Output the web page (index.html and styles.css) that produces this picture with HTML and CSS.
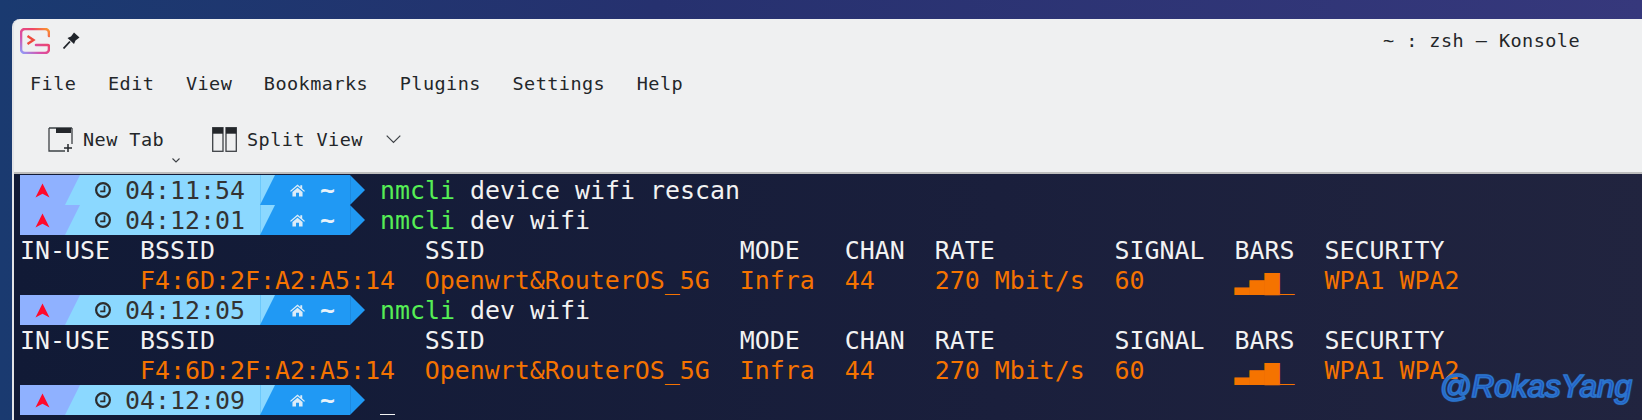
FILE: index.html
```html
<!DOCTYPE html>
<html lang="en">
<head>
<meta charset="utf-8">
<title>~ : zsh — Konsole</title>
<link rel="stylesheet" href="styles.css">
</head>
<body>
<svg class="defs" width="0" height="0" aria-hidden="true">
  <defs>
    <linearGradient id="logo-grad" x1="0" y1="1" x2="1" y2="0">
      <stop offset="0" stop-color="#8f9dfa"/>
      <stop offset="0.35" stop-color="#d94fa8"/>
      <stop offset="0.7" stop-color="#ee4468"/>
      <stop offset="1" stop-color="#fb9a2c"/>
    </linearGradient>
    <symbol id="arch" viewBox="0 0 16 16">
      <path d="M8 0.500 L15.500 15.500 L8 11.400 L0.500 15.500 Z" fill="#ff0a2a"/>
    </symbol>
    <symbol id="clock" viewBox="0 0 16 16">
      <circle cx="8" cy="8" r="6.900" fill="none" stroke="#2d2d2d" stroke-width="2.200"/>
      <path d="M9.500 3.800 V9.300 H5.200" fill="none" stroke="#2d2d2d" stroke-width="1.700"/>
    </symbol>
    <symbol id="home" viewBox="0 0 16 13">
      <path d="M8 0.200 L11 2.700 V0.800 H13 V4.300 L16 7 L15 7.800 L8 2 L1 7.800 L0 7 Z M2.600 8 L8 3.500 L13.400 8 V13 H9.600 V9 H6.400 V13 H2.600 Z" fill="#dcecf8"/>
    </symbol>
  </defs>
</svg>
<div class="desktop">
  <div class="window">
    <header class="titlebar">
      <svg class="logo" viewBox="0 0 30 26" width="30" height="26">
        <path d="M29 8 V5 A4 4 0 0 0 25 1 H5 A4 4 0 0 0 1 5 V21 A4 4 0 0 0 5 25 H25 A4 4 0 0 0 29 21 V18.500 A1.500 1.500 0 0 0 27.500 17 H16" fill="none" stroke="url(#logo-grad)" stroke-width="2.600" stroke-linecap="round"/>
        <path d="M7.500 8 L13.500 12 L7.500 16" fill="none" stroke="#ef4a3c" stroke-width="2.400"/>
      </svg>
      <svg class="pin" viewBox="0 0 17 17" width="17" height="17">
        <path d="M11 0.500 L16.500 5.500 L12.500 8.500 L11 12 L4.500 6 L8 4.500 Z" fill="#20242a"/>
        <path d="M7 9.500 L0.500 16.500" stroke="#20242a" stroke-width="1.800"/>
      </svg>
      <span class="wintitle">~ : zsh — Konsole</span>
    </header>
    <nav class="menubar">
      <span>File</span><span>Edit</span><span>View</span><span>Bookmarks</span><span>Plugins</span><span>Settings</span><span>Help</span>
    </nav>
    <div class="toolbar">
      <div class="tool tool-new">
        <svg viewBox="0 0 25 25" width="25" height="25">
          <path d="M1 1 H24 M1 1 V24 H17 M24 1 V17" fill="none" stroke="#3d4146" stroke-width="1.300"/>
          <rect x="8" y="1" width="15" height="5" fill="#24272b"/>
          <path d="M20 17 V25 M16 21 H24" stroke="#24272b" stroke-width="1.500"/>
        </svg>
        <span>New Tab</span>
        <svg class="mini-chev" viewBox="0 0 8 5" width="8" height="5"><path d="M0.500 0.500 L4 4 L7.500 0.500" fill="none" stroke="#3d4146" stroke-width="1.100"/></svg>
      </div>
      <div class="tool tool-split">
        <svg viewBox="0 0 25 25" width="25" height="25">
          <rect x="0.700" y="0.700" width="10.300" height="23.600" fill="none" stroke="#3d4146" stroke-width="1.300"/>
          <rect x="14" y="0.700" width="10.300" height="23.600" fill="none" stroke="#3d4146" stroke-width="1.300"/>
          <rect x="0.700" y="0.700" width="10.300" height="6" fill="#24272b"/>
          <rect x="14" y="0.700" width="10.300" height="6" fill="#24272b"/>
        </svg>
        <span>Split View</span>
        <svg class="chev" viewBox="0 0 15 9" width="15" height="9"><path d="M0.700 0.700 L7.500 7.500 L14.300 0.700" fill="none" stroke="#3d4146" stroke-width="1.200"/></svg>
      </div>
    </div>
    <main class="term">
      <div class="line">
        <div class="prompt"><span class="seg-os"><svg class="arch"><use href="#arch"/></svg></span><span class="seg-time"><svg class="clock"><use href="#clock"/></svg><span class="txt">04:11:54</span></span><span class="seg-home"><svg class="home"><use href="#home"/></svg><span class="txt">~</span></span><span class="seg-tip"></span></div>
        <span class="cmd txt"><b>nmcli</b> device wifi rescan</span>
      </div>
      <div class="line">
        <div class="prompt"><span class="seg-os"><svg class="arch"><use href="#arch"/></svg></span><span class="seg-time"><svg class="clock"><use href="#clock"/></svg><span class="txt">04:12:01</span></span><span class="seg-home"><svg class="home"><use href="#home"/></svg><span class="txt">~</span></span><span class="seg-tip"></span></div>
        <span class="cmd txt"><b>nmcli</b> dev wifi</span>
      </div>
      <div class="line head"><span class="txt">IN-USE  BSSID              SSID                 MODE   CHAN  RATE        SIGNAL  BARS  SECURITY</span></div>
      <div class="line data"><span class="txt">        F4:6D:2F:A2:A5:14  Openwrt&amp;RouterOS_5G  Infra  44    270 Mbit/s  60      ▂▄▆_  WPA1 WPA2</span></div>
      <div class="line">
        <div class="prompt"><span class="seg-os"><svg class="arch"><use href="#arch"/></svg></span><span class="seg-time"><svg class="clock"><use href="#clock"/></svg><span class="txt">04:12:05</span></span><span class="seg-home"><svg class="home"><use href="#home"/></svg><span class="txt">~</span></span><span class="seg-tip"></span></div>
        <span class="cmd txt"><b>nmcli</b> dev wifi</span>
      </div>
      <div class="line head"><span class="txt">IN-USE  BSSID              SSID                 MODE   CHAN  RATE        SIGNAL  BARS  SECURITY</span></div>
      <div class="line data"><span class="txt">        F4:6D:2F:A2:A5:14  Openwrt&amp;RouterOS_5G  Infra  44    270 Mbit/s  60      ▂▄▆_  WPA1 WPA2</span></div>
      <div class="line">
        <div class="prompt"><span class="seg-os"><svg class="arch"><use href="#arch"/></svg></span><span class="seg-time"><svg class="clock"><use href="#clock"/></svg><span class="txt">04:12:09</span></span><span class="seg-home"><svg class="home"><use href="#home"/></svg><span class="txt">~</span></span><span class="seg-tip"></span></div>
        <span class="cursor"></span>
      </div>
    </main>
  </div>
  <div class="watermark">@RokasYang</div>
</div>
</body>
</html>
```

FILE: styles.css
```css
* { box-sizing: border-box; }
html, body { margin: 0; padding: 0; }
body { width: 1642px; height: 420px; overflow: hidden; }
.defs { position: absolute; }
.desktop {
  position: relative;
  width: 1642px;
  height: 420px;
  overflow: hidden;
  padding: 19px 0 0 12px;
  background: linear-gradient(90deg, #1a3a70 0%, #26316f 40%, #36387c 100%);
}
.window {
  width: 1640px;
  height: 420px;
  background: #eff0f1;
  border-radius: 8px 8px 0 0;
  border-left: 2px solid #e3e4e8;
  font-family: "DejaVu Sans Mono", monospace;
  color: #232629;
}
.titlebar {
  display: flex;
  align-items: center;
  height: 43px;
  padding: 0 0 0 6px;
}
.logo { flex: none; }
.pin { flex: none; margin-left: 13px; }
.wintitle {
  margin-left: 1303px;
  font-size: 18.500px;
  letter-spacing: 0.450px;
  white-space: pre;
}
.menubar {
  display: flex;
  align-items: center;
  gap: 31.600px;
  height: 42px;
  padding-left: 16px;
  font-size: 18.500px;
  letter-spacing: 0.450px;
}
.toolbar {
  display: flex;
  align-items: center;
  height: 70px;
  padding: 3px 0 0 34px;
  font-size: 18.500px;
  letter-spacing: 0.450px;
  border-bottom: 2px solid #bdbdbd;
}
.tool { display: flex; align-items: center; }
.tool-new { width: 164px; position: relative; }
.tool-new > span { margin-left: 10px; }
.mini-chev { position: absolute; left: 124px; top: 31px; }
.tool-split > span { margin-left: 10px; }
.chev { margin-left: 23px; }
.term {
  height: 260px;
  padding: 1px 0 0 6px;
  background: linear-gradient(90deg, #111a36 0%, #1a1f3c 60%, #21243f 100%);
  font-size: 24.920px;
  line-height: 30px;
  color: #f2f2f2;
}
.line {
  display: flex;
  align-items: center;
  height: 30px;
  white-space: pre;
}
.txt { padding-top: 2px; }
.data { color: #f57300; }
.prompt { display: flex; flex: none; height: 30px; margin-right: 15px; }
.seg-os {
  position: relative;
  z-index: 3;
  display: flex;
  align-items: center;
  width: 60px;
  height: 30px;
  padding-left: 15px;
  background: #8fb1ff;
  clip-path: polygon(0 0, 100% 0, 75% 100%, 0 100%);
}
.arch { width: 15px; height: 15px; }
.seg-time {
  position: relative;
  z-index: 2;
  display: flex;
  align-items: center;
  width: 210px;
  height: 30px;
  margin-left: -15px;
  padding-left: 30px;
  background: linear-gradient(90deg, #8bd8ff 195px, #6cc9fb 195px, #6cc9fb 196px, #8bd8ff 196px);
  color: #333;
  clip-path: polygon(0 0, 100% 0, 195px 100%, 0 100%);
}
.clock { width: 16px; height: 16px; margin-right: 14px; }
.seg-home {
  position: relative;
  z-index: 1;
  display: flex;
  align-items: center;
  width: 90px;
  height: 30px;
  margin-left: -15px;
  padding-left: 30px;
  background: #2099f4;
  color: #e8f2fa;
  font-weight: bold;
}
.home { width: 15px; height: 13px; margin-right: 15px; }
.seg-tip {
  width: 15px;
  height: 30px;
  background: linear-gradient(90deg, #1c8ae0 1px, #2099f4 1px);
  clip-path: polygon(0 0, 100% 50%, 0 100%);
}
.cmd b { font-weight: normal; color: #55ee55; }
.cursor {
  align-self: flex-end;
  width: 15px;
  height: 1px;
  background: #f2f2f2;
}
.watermark {
  position: absolute;
  right: 10px;
  bottom: 14px;
  font-family: "Liberation Sans", sans-serif;
  font-style: italic;
  font-size: 31.500px;
  line-height: 40px;
  color: #1f50c0;
  -webkit-text-stroke: 1.700px #2b74cc;
  text-shadow: 0 0 2px #2f80d8;
}
```
